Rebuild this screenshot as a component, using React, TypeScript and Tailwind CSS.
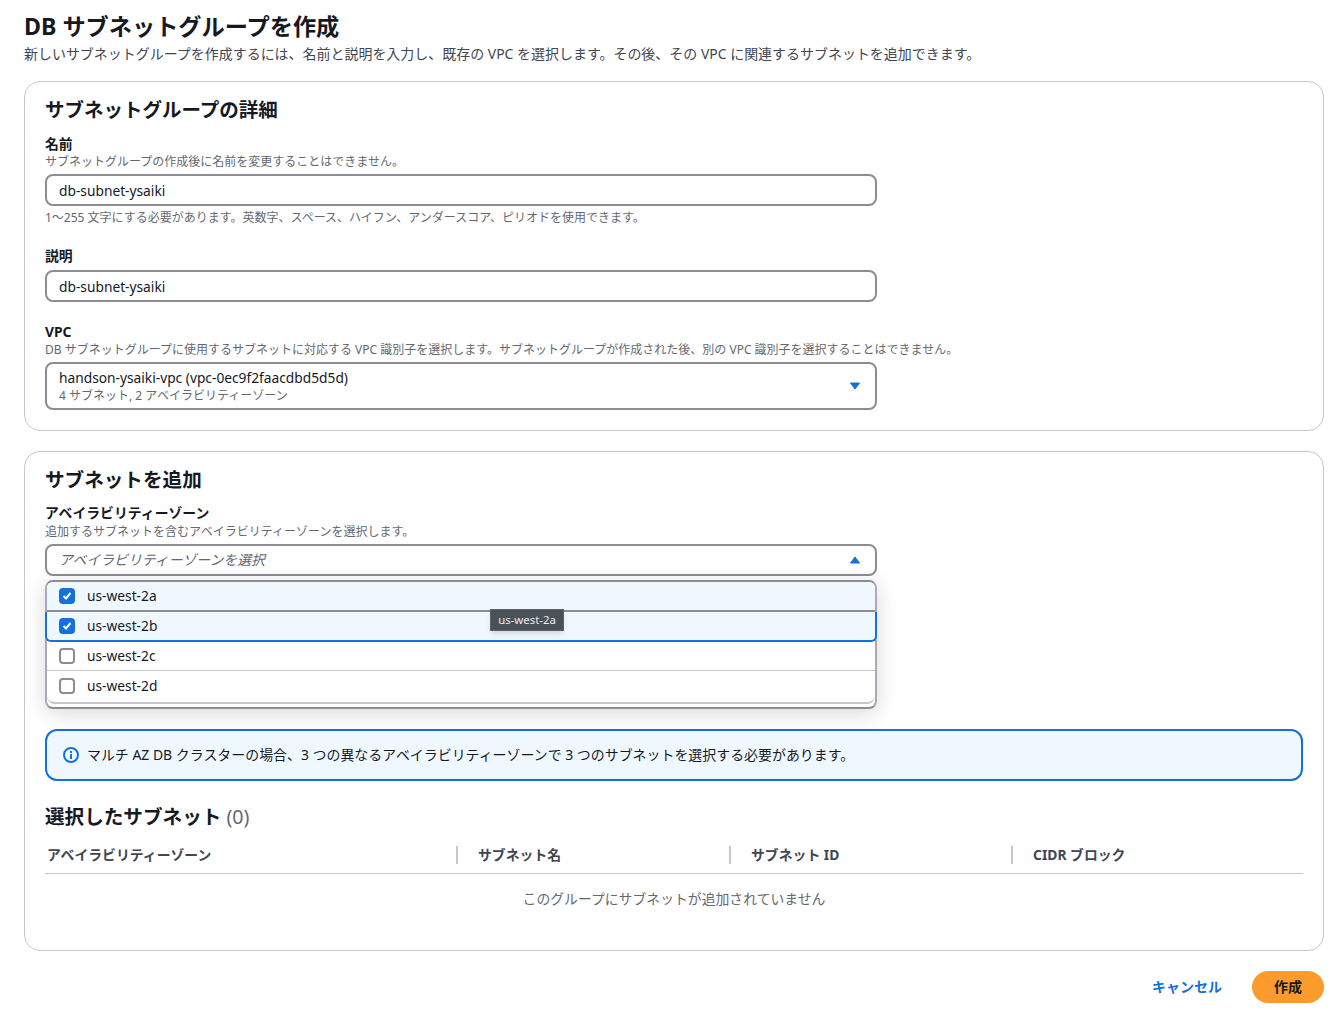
import React from 'react';

const font = { fontFamily: '"Noto Sans", "Noto Sans CJK JP", sans-serif' };

const Caret = ({ up }: { up?: boolean }) => (
  <svg width="12" height="10" viewBox="0 0 12 10" className="text-[#1470dc]">
    <path d={up ? 'M6 2 10.5 8h-9Z' : 'M1.5 2h9L6 8Z'} fill="currentColor" stroke="currentColor" strokeWidth="1" strokeLinejoin="round" />
  </svg>
);

const Check = ({ on }: { on: boolean }) =>
  on ? (
    <span className="flex h-4 w-4 items-center justify-center rounded-[4px] bg-[#1470dc]">
      <svg width="12" height="12" viewBox="0 0 12 12" fill="none" stroke="white" strokeWidth="2">
        <path d="M2.5 6 5 8.5 9.5 3" />
      </svg>
    </span>
  ) : (
    <span className="h-4 w-4 rounded-[4px] border-2 border-[#8c8c94] bg-white" />
  );

const Label = ({ children }: { children: React.ReactNode }) => (
  <div className="text-[13.85px] leading-[18px] font-bold">{children}</div>
);

const Hint = ({ children, className = '' }: { children: React.ReactNode; className?: string }) => (
  <div className={`text-xs leading-[16px] text-[#656871] ${className}`}>{children}</div>
);

const Input = ({ value }: { value: string }) => (
  <div className="flex h-8 w-[832px] items-center rounded-lg border-2 border-[#8c8c94] px-3 pt-0.5 text-[13.75px]">
    {value}
  </div>
);

const columns = [
  ['アベイラビリティーゾーン', 'w-[411px] pl-0.5'],
  ['サブネット名', 'w-[273px]'],
  ['サブネット ID', 'w-[282px]'],
  ['CIDR ブロック', 'flex-1'],
];

const zones = [
  { name: 'us-west-2a', on: true },
  { name: 'us-west-2b', on: true },
  { name: 'us-west-2c', on: false },
  { name: 'us-west-2d', on: false },
];

const rowStyles = [
  'h-[30px] rounded-t-md border-b-2 border-[#8c8c94] bg-[#f0f8ff]',
  'h-[30px] -mx-0.5 rounded-b-md border-x-2 border-b-2 border-[#1470dc] bg-[#f0f8ff]',
  'h-[29px] border-b border-[#c6c6cd]',
  'h-[30px]',
];

export default function App() {
  return (
    <div className="h-[1024px] overflow-hidden bg-white pt-[12px] pr-5 pl-6 text-[#16191f]" style={font}>
      <h1 className="text-[23.2px] leading-[28px] font-bold">DB サブネットグループを作成</h1>
      <p className="mt-[4px] text-[13.97px] leading-[20px] text-[#424650]">
        新しいサブネットグループを作成するには、名前と説明を入力し、既存の VPC を選択します。その後、その VPC に関連するサブネットを追加できます。
      </p>

      <section className="mt-[17px] h-[350px] rounded-2xl border border-[#c6c6cd] px-5 pt-[14px]">
        <h2 className="text-[19.5px] leading-[28px] font-bold">サブネットグループの詳細</h2>
        <div className="mt-[11px]">
          <Label>名前</Label>
          <Hint className="mt-px mb-1">サブネットグループの作成後に名前を変更することはできません。</Hint>
          <Input value="db-subnet-ysaiki" />
          <Hint className="mt-1">1～255 文字にする必要があります。英数字、スペース、ハイフン、アンダースコア、ピリオドを使用できます。</Hint>
        </div>
        <div className="mt-[21px]">
          <Label>説明</Label>
          <div className="mt-[5px]">
            <Input value="db-subnet-ysaiki" />
          </div>
        </div>
        <div className="mt-[21px]">
          <Label>VPC</Label>
          <Hint className="mt-px mb-1">DB サブネットグループに使用するサブネットに対応する VPC 識別子を選択します。サブネットグループが作成された後、別の VPC 識別子を選択することはできません。</Hint>
          <div className="flex h-12 w-[832px] items-center justify-between rounded-lg border-2 border-[#8c8c94] pr-3.5 pl-3">
            <div>
              <div className="text-[13.75px] leading-[18px]">handson-ysaiki-vpc (vpc-0ec9f2faacdbd5d5d)</div>
              <div className="mt-px text-xs leading-[16px] text-[#656871]">4 サブネット, 2 アベイラビリティーゾーン</div>
            </div>
            <Caret />
          </div>
        </div>
      </section>

      <section className="mt-5 h-[500px] rounded-2xl border border-[#c6c6cd] px-5 pt-[14px]">
        <h2 className="text-[19.6px] leading-[28px] font-bold">サブネットを追加</h2>
        <div className="mt-2.5">
          <Label>アベイラビリティーゾーン</Label>
          <Hint className="mt-0.5 mb-1">追加するサブネットを含むアベイラビリティーゾーンを選択します。</Hint>
          <div className="relative w-[832px]">
            <div className="flex h-8 items-center justify-between rounded-lg border-2 border-[#8c8c94] pr-3.5 pl-3 text-[13.85px] text-[#656871] italic">
              アベイラビリティーゾーンを選択
              <Caret up />
            </div>
            <div className="absolute top-9 left-0 z-10 h-[129px] w-full rounded-lg border-2 border-[#aaaab2] border-t-[#8c8c94] border-b-[#8c8c94] bg-white shadow-[0_4px_20px_1px_rgba(0,7,22,0.14)]">
              <div className="h-[122px] rounded-b-lg border-b-2 border-[#c6c6cd]">
                {zones.map((z, i) => (
                  <div key={z.name} className={`flex items-center gap-3 pl-3 text-[13.75px] ${rowStyles[i]}`}>
                    <Check on={z.on} />
                    {z.name}
                  </div>
                ))}
              </div>
              <div className="absolute top-[27px] left-[443px] flex h-[22px] w-[74px] items-center justify-center border border-[#5d6468] bg-[#4b5257] pb-px text-[11.4px] text-[#e8eaed] shadow-md">
                us-west-2a
              </div>
            </div>
          </div>
        </div>

        <div className="mt-[153px] flex h-[52px] items-center gap-2 rounded-xl border-2 border-[#1470dc] bg-[#f0f8ff] px-4 text-[13.95px]">
          <svg width="16" height="16" viewBox="0 0 16 16" fill="none" stroke="#1470dc" strokeWidth="2">
            <circle cx="8" cy="8" r="7" />
            <path d="M8 12V7M8 6V4" />
          </svg>
          マルチ AZ DB クラスターの場合、3 つの異なるアベイラビリティーゾーンで 3 つのサブネットを選択する必要があります。
        </div>

        <h2 className="mt-[22px] text-[19.6px] leading-[28px] font-bold">
          選択したサブネット <span className="font-normal text-[#656871]">(0)</span>
        </h2>
        <div className="mt-3 flex h-[31px] items-center border-b border-[#c6c6cd] pt-0.5 pb-2 text-[13.85px] font-bold text-[#424650]">
          {columns.map(([name, cls], i) => (
            <div key={name} className={`flex items-center ${cls}`}>
              {i > 0 && <span className="mr-5 h-[18px] w-0.5 bg-[#c6c6cd]" />}
              {name}
            </div>
          ))}
        </div>
        <div className="mt-[15px] text-center text-[13.85px] text-[#656871]">このグループにサブネットが追加されていません</div>
      </section>

      <div className="mt-5 flex items-center justify-end gap-[30px]">
        <span className="text-sm font-bold text-[#1470dc]">キャンセル</span>
        <button className="h-8 w-[72px] rounded-full bg-[#fa9b2c] text-sm font-bold">作成</button>
      </div>
    </div>
  );
}
